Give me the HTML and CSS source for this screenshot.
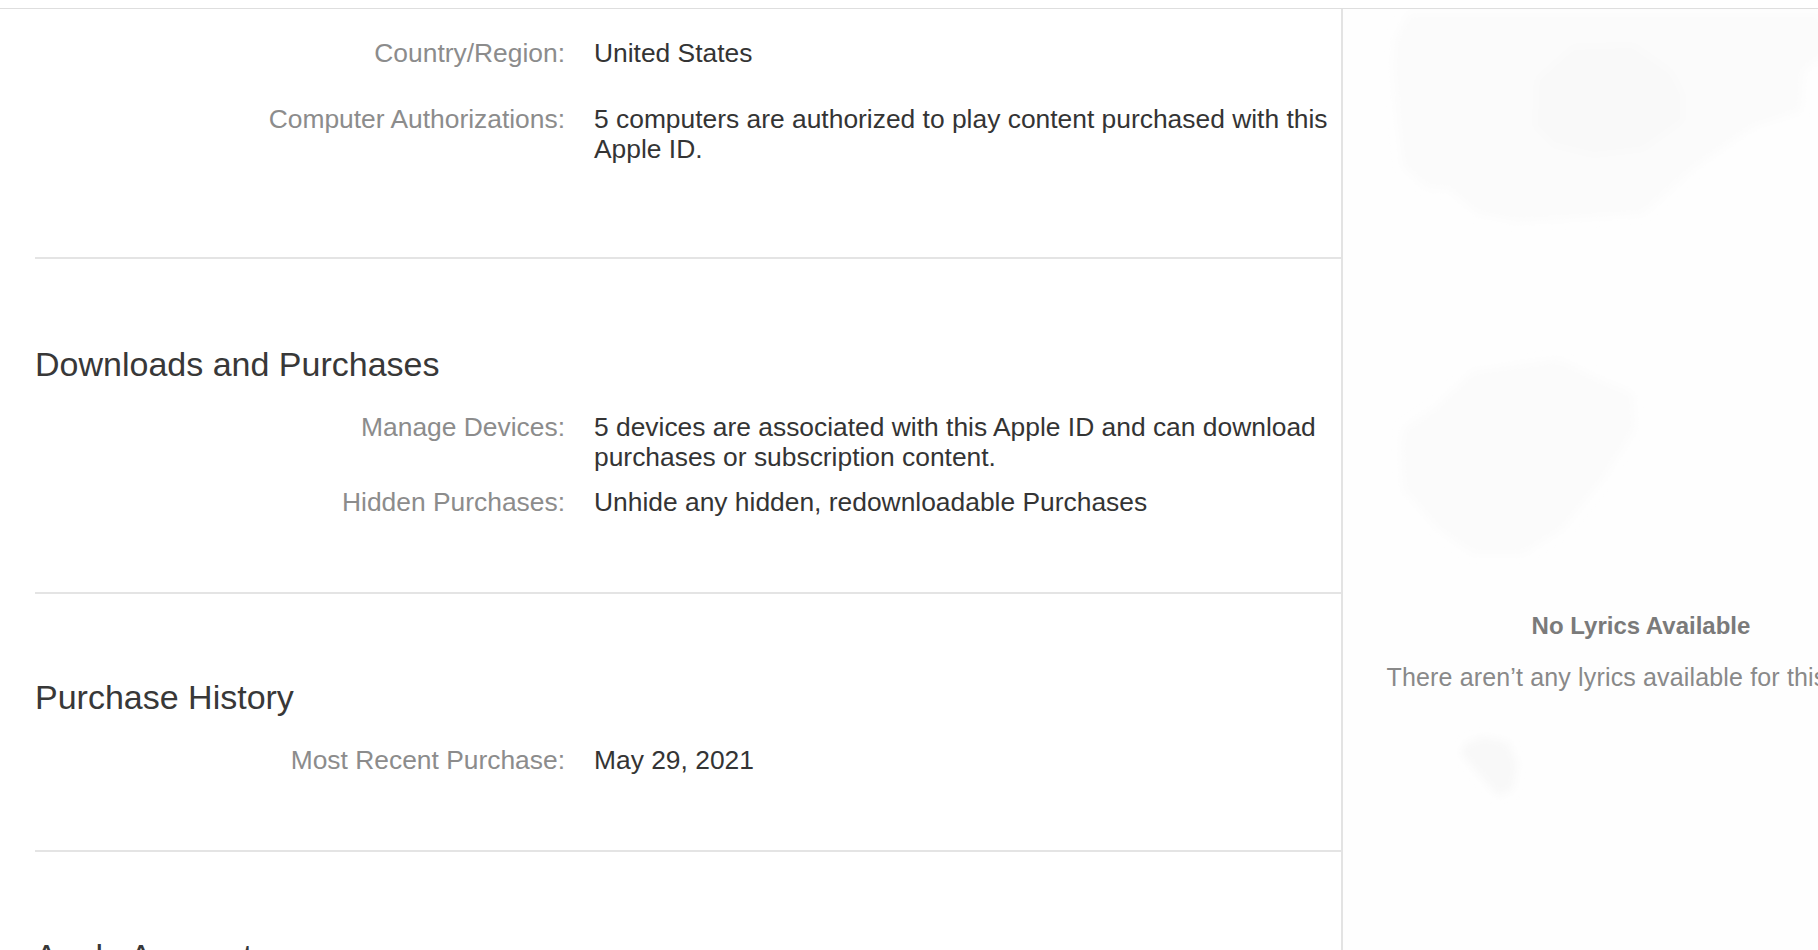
FILE: index.html
```html
<!DOCTYPE html>
<html lang="en">
<head>
<meta charset="utf-8">
<title>Account Information</title>
<link rel="stylesheet" href="styles.css">
</head>
<body>
<div class="topbar"></div>
<div class="layout">
  <main class="main">
    <section class="section section-first">
      <div class="row row-country">
        <div class="label">Country/Region:</div>
        <div class="value">United States</div>
      </div>
      <div class="row row-auth">
        <div class="label">Computer Authorizations:</div>
        <div class="value">5 computers are authorized to play content purchased with this Apple ID.</div>
      </div>
    </section>
    <section class="section section-downloads">
      <h2 class="section-title">Downloads and Purchases</h2>
      <div class="row row-first">
        <div class="label">Manage Devices:</div>
        <div class="value">5 devices are associated with this Apple ID and can download purchases or subscription content.</div>
      </div>
      <div class="row row-tight">
        <div class="label">Hidden Purchases:</div>
        <div class="value">Unhide any hidden, redownloadable Purchases</div>
      </div>
    </section>
    <section class="section section-history">
      <h2 class="section-title">Purchase History</h2>
      <div class="row row-first">
        <div class="label">Most Recent Purchase:</div>
        <div class="value">May 29, 2021</div>
      </div>
    </section>
    <section class="section section-account">
      <h2 class="section-title">Apple Account</h2>
    </section>
  </main>
  <aside class="lyrics">
    <svg class="lyrics-art" width="596" height="941" viewBox="0 0 596 941" aria-hidden="true">
      <defs>
        <filter id="soft" x="-20%" y="-20%" width="140%" height="140%">
          <feGaussianBlur stdDeviation="4"/>
        </filter>
      </defs>
      <g filter="url(#soft)">
        <path d="M52 30 L66 4 L476 4 L492 38 L460 62 L458 102 L410 118 L350 160 L300 205 L175 213 L135 205 L105 180 L85 180 L60 158 L55 118 L50 60 Z" fill="#fbfbfb"/>
        <path d="M192 70 L230 36 L290 34 L330 62 L342 86 L342 112 L300 142 L250 148 L210 138 L190 118 Z" fill="#f9f9f9"/>
        <path d="M58 440 L60 420 L90 400 L130 362 L215 350 L260 372 L290 384 L292 420 L260 470 L220 520 L180 545 L130 545 L95 520 L60 480 Z" fill="#fbfbfb"/>
        <path d="M122 735 L140 728 L165 733 L174 755 L170 780 L155 787 L140 770 L118 744 Z" fill="#f8f8f8"/>
      </g>
    </svg>
    <div class="lyrics-body">
      <div class="lyrics-title">No Lyrics Available</div>
      <div class="lyrics-text">There aren’t any lyrics available for this song.</div>
    </div>
  </aside>
</div>
</body>
</html>
```

FILE: styles.css
```css
html, body {
  margin: 0;
  padding: 0;
  height: 950px;
  overflow: hidden;
  background: #ffffff;
}

body {
  font-family: "Liberation Sans", Arial, Helvetica, sans-serif;
  color: #333333;
}

.topbar {
  height: 8px;
  border-bottom: 1px solid #dedede;
  background: #ffffff;
}

.layout {
  display: flex;
  width: 1939px;
  height: 941px;
}

.main {
  flex: 0 0 1341px;
  border-right: 2px solid #e3e3e3;
  overflow: hidden;
}

.section {
  margin-left: 35px;
  border-bottom: 2px solid #e4e4e4;
}

.section-first {
  padding-top: 29px;
  padding-bottom: 93px;
}

.section-downloads {
  padding-top: 85px;
  padding-bottom: 75px;
}

.section-history {
  padding-top: 83px;
  padding-bottom: 75px;
}

.section-account {
  padding-top: 84px;
  border-bottom: none;
}

.section-title {
  margin: 0;
  font-size: 34px;
  line-height: 40px;
  font-weight: normal;
  color: #383838;
}

.row {
  display: grid;
  grid-template-columns: 530px 1fr;
  column-gap: 29px;
  font-size: 26.4px;
  line-height: 30px;
  padding-right: 10px;
}

.row-auth {
  margin-top: 36px;
}

.row-first {
  margin-top: 28px;
}

.row-tight {
  margin-top: 15px;
}

.label {
  text-align: right;
  color: #8c8c8c;
  white-space: nowrap;
}

.value {
  color: #343434;
}

.lyrics {
  position: relative;
  flex: 0 0 596px;
  background: #fefefe;
  overflow: hidden;
}

.lyrics-art {
  position: absolute;
  left: 0;
  top: 0;
}

.lyrics-body {
  position: relative;
  padding-top: 602px;
  display: flex;
  flex-direction: column;
  align-items: center;
  text-align: center;
}

.lyrics-title {
  font-size: 24px;
  line-height: 30px;
  font-weight: bold;
  color: #7a7a7a;
  white-space: nowrap;
}

.lyrics-text {
  margin-top: 21px;
  font-size: 25px;
  line-height: 30px;
  letter-spacing: 0.15px;
  color: #898989;
  white-space: nowrap;
}
```
